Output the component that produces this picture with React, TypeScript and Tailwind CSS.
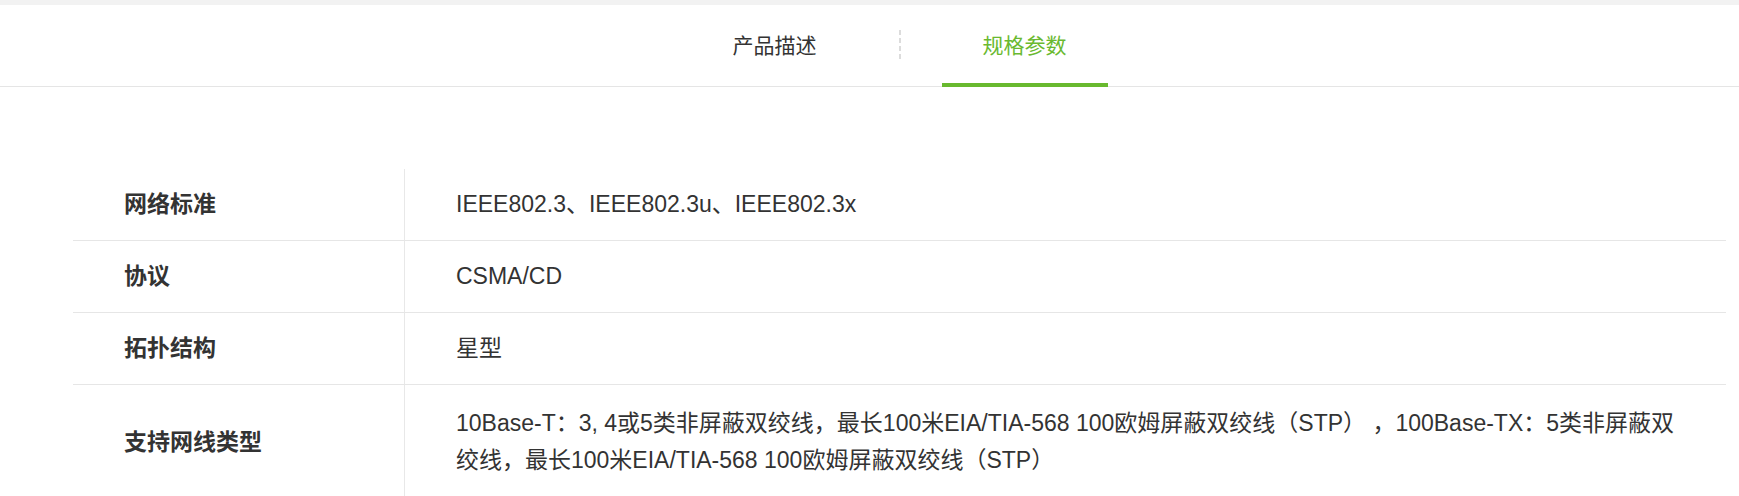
import React from "react";

const rows: { label: string; value: React.ReactNode; last?: boolean }[] = [
  { label: "网络标准", value: "IEEE802.3、IEEE802.3u、IEEE802.3x" },
  { label: "协议", value: "CSMA/CD" },
  { label: "拓扑结构", value: "星型" },
  {
    label: "支持网线类型",
    value: (
      <>
        <span className="block whitespace-pre">
          {"10Base-T：3, 4或5类非屏蔽双绞线，最长100米EIA/TIA-568 100欧姆屏蔽双绞线（STP） ，100Base-TX：5类非屏蔽双"}
        </span>
        <span className="block whitespace-nowrap">绞线，最长100米EIA/TIA-568 100欧姆屏蔽双绞线（STP）</span>
      </>
    ),
    last: true,
  },
];

export default function App() {
  return (
    <div
      className="w-[1739px] min-h-[496px] bg-white text-[#333]"
      style={{ fontFamily: '"Liberation Sans", Arial, "Noto Sans CJK SC", sans-serif' }}
    >
      <div className="h-[5px] bg-[#f2f2f2]" />
      <div className="border-b border-[#e5e5e5]">
        <div className="ml-[73px] w-[1653px] h-[81px] flex justify-center items-stretch">
          <div className="px-[41px] flex items-center text-[21px] text-[#333]">产品描述</div>
          <div className="mx-[41px] flex items-center">
            <div className="w-[2px] h-[31px] bg-[linear-gradient(to_bottom,#dcdcdc_60%,transparent_60%)] bg-[length:2px_8px]" />
          </div>
          <div className="relative px-[41px] flex items-center text-[21px] text-[#6ab930]">
            规格参数
            <div className="absolute left-0 right-0 bottom-[-1px] h-[4px] bg-[#68b92e]" />
          </div>
        </div>
      </div>

      <div className="ml-[73px] w-[1653px] mt-[82px]">
        {rows.map((r) => (
          <div key={r.label} className={`flex ${r.last ? "" : "border-b border-[#e6e6e6]"}`}>
            <div className="w-[332px] shrink-0 border-r border-[#e8e8e8] pl-[51px] flex items-center text-[23px] font-bold text-[#333]">
              {r.label}
            </div>
            <div
              className={`flex-1 pl-[51px] pr-[51px] ${r.last ? "py-[20px]" : "py-[17px]"} leading-[37px] text-[23px] text-[#333]`}
            >
              {r.value}
            </div>
          </div>
        ))}
      </div>
    </div>
  );
}
